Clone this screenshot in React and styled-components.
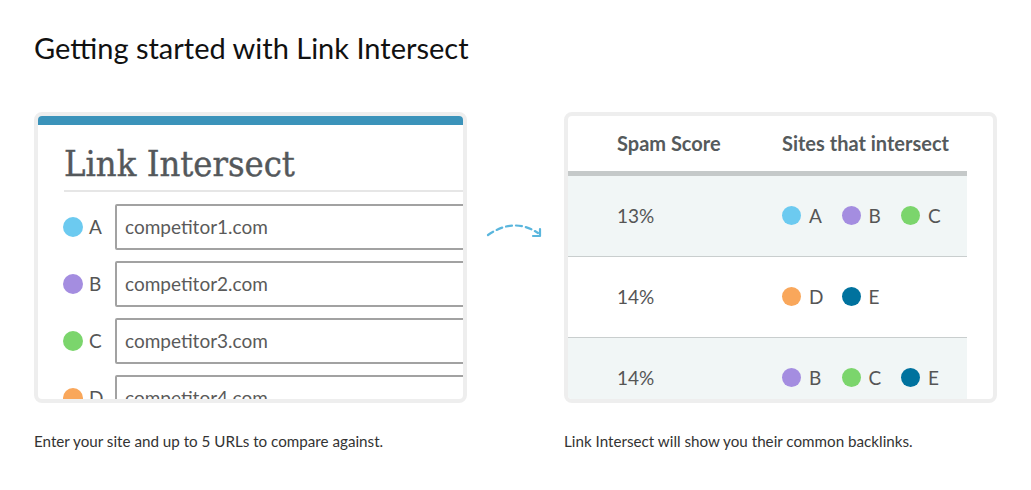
import React from "react";
import styled, { createGlobalStyle } from "styled-components";

const Global = createGlobalStyle`
  html, body { margin: 0; padding: 0; background: #fff; }
  body { font-family: Lato, "Open Sans", sans-serif; color: #222; }
`;

const Page = styled.main`
  padding: 31px 0 0 34px;
`;

const Title = styled.h1`
  margin: 0 0 46px;
  font-family: Lato, sans-serif;
  font-weight: 400;
  font-size: 29px;
  line-height: 1.2;
  color: #111;
`;

const Grid = styled.section`
  display: grid;
  grid-template-columns: 433px 97px 433px;
  row-gap: 29px;
`;

const Card = styled.div`
  box-sizing: border-box;
  height: 291px;
  border: 4px solid #eeeeee;
  border-radius: 8px;
  overflow: hidden;
  background: #fff;
`;

const Bar = styled.div`
  height: 9px;
  background: #3b93ba;
`;

const AppTitle = styled.h2`
  margin: 0 0 12px 26px;
  padding: 17px 0 4px;
  font-family: "DejaVu Serif", "Liberation Serif", serif;
  font-stretch: condensed;
  font-weight: 400;
  font-size: 36px;
  line-height: 44px;
  color: #54585b;
  -webkit-text-stroke: 0.4px #54585b;
  border-bottom: 2px solid #e6e6e6;
`;

const InputList = styled.div`
  display: flex;
  flex-direction: column;
  gap: 11px;
  padding-left: 25px;
`;

const InputRow = styled.div`
  display: flex;
  align-items: center;
  height: 46px;
`;

const Label = styled.div`
  display: flex;
  align-items: center;
  width: 52px;
  flex: none;
  gap: 6px;
  font-size: 19px;
  color: #555;
`;

const Dot = styled.span`
  display: inline-block;
  flex: none;
  width: ${(p) => p.$size}px;
  height: ${(p) => p.$size}px;
  border-radius: 50%;
  background: ${(p) => p.$color};
`;

const Field = styled.div`
  box-sizing: border-box;
  flex: none;
  width: 400px;
  height: 46px;
  border: 2px solid #a2a2a2;
  border-radius: 2px;
  padding: 0 0 0 8px;
  display: flex;
  align-items: center;
  font-size: 19px;
  color: #5a5a5a;
`;

const ArrowCell = styled.div`
  display: flex;
  justify-content: center;
  align-items: flex-start;
  padding-top: 108px;
`;

const Table = styled.div`
  width: 399px;
`;

const HeadRow = styled.div`
  display: grid;
  grid-template-columns: 165px 1fr;
  align-items: center;
  height: 55px;
  padding-left: 49px;
  border-bottom: 5px solid #c5c9c9;
  font-weight: 700;
  font-size: 20px;
  color: #555a5c;
`;

const Row = styled.div`
  display: grid;
  grid-template-columns: 165px 1fr;
  align-items: center;
  height: 80px;
  padding-left: 49px;
  border-bottom: 1.5px solid #c9cece;
  background: ${(p) => (p.$shaded ? "#f1f6f6" : "#fff")};
  font-size: 19px;
  color: #555;
`;

const Sites = styled.div`
  display: flex;
  align-items: center;
`;

const Site = styled.span`
  display: inline-flex;
  align-items: center;
  gap: 8px;
  width: 59.5px;
  font-size: 19px;
  color: #555;
`;

const Caption = styled.p`
  margin: 0;
  font-size: 15.2px;
  line-height: 1.2;
  color: #333;
`;

const COLORS = {
  A: "#6ccaf0",
  B: "#a48de0",
  C: "#7bd56c",
  D: "#f9a75b",
  E: "#00729e",
};

const inputs = [
  ["A", "competitor1.com"],
  ["B", "competitor2.com"],
  ["C", "competitor3.com"],
  ["D", "competitor4.com"],
];

const rows = [
  ["13%", ["A", "B", "C"]],
  ["14%", ["D", "E"]],
  ["14%", ["B", "C", "E"]],
];

function Arrow() {
  return (
    <svg width="60" height="22" viewBox="0 0 60 22" fill="none">
      <path
        d="M2 15 Q28 -3 52 13"
        stroke="#5ab6dd"
        strokeWidth="2.2"
        strokeDasharray="6 4"
        strokeLinecap="round"
      />
      <path
        d="M47 16 H54 V9"
        stroke="#5ab6dd"
        strokeWidth="2.2"
        strokeLinecap="round"
        strokeLinejoin="round"
      />
    </svg>
  );
}

export default function App() {
  return (
    <>
      <Global />
      <Page>
        <Title>Getting started with Link Intersect</Title>
        <Grid>
          <Card>
            <Bar />
            <AppTitle>Link Intersect</AppTitle>
            <InputList>
              {inputs.map(([k, v]) => (
                <InputRow key={k}>
                  <Label>
                    <Dot $size={20} $color={COLORS[k]} />
                    {k}
                  </Label>
                  <Field>{v}</Field>
                </InputRow>
              ))}
            </InputList>
          </Card>
          <ArrowCell>
            <Arrow />
          </ArrowCell>
          <Card>
            <Table>
              <HeadRow>
                <span>Spam Score</span>
                <span>Sites that intersect</span>
              </HeadRow>
              {rows.map(([score, sites], i) => (
                <Row key={i} $shaded={i % 2 === 0}>
                  <span>{score}</span>
                  <Sites>
                    {sites.map((s) => (
                      <Site key={s}>
                        <Dot $size={19} $color={COLORS[s]} />
                        {s}
                      </Site>
                    ))}
                  </Sites>
                </Row>
              ))}
            </Table>
          </Card>
          <Caption>Enter your site and up to 5 URLs to compare against.</Caption>
          <span />
          <Caption>Link Intersect will show you their common backlinks.</Caption>
        </Grid>
      </Page>
    </>
  );
}
